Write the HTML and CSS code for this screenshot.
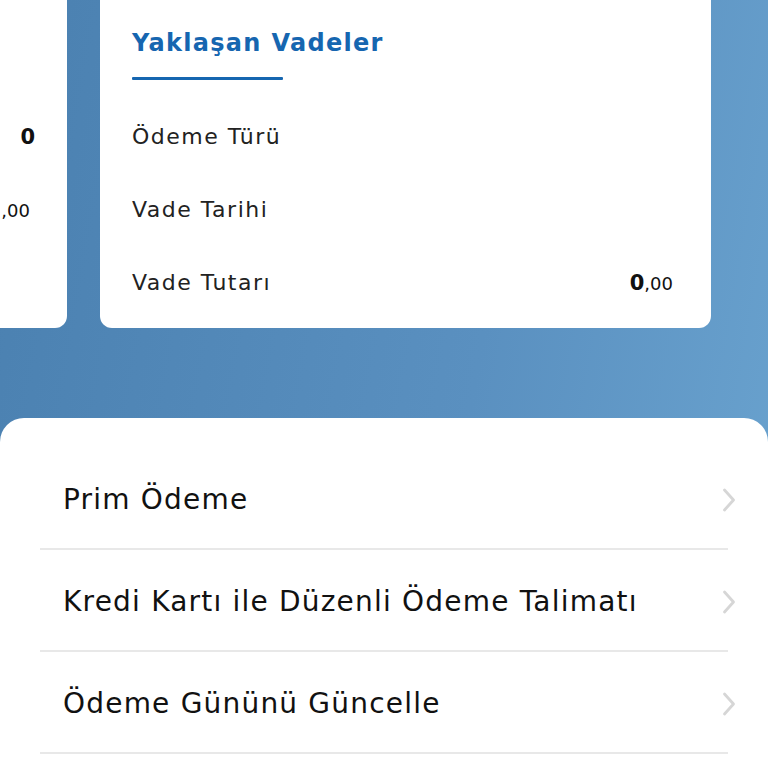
FILE: index.html
```html
<!DOCTYPE html>
<html lang="tr">
<head>
<meta charset="utf-8">
<link rel="stylesheet" href="styles.css">
</head>
<body>
<div class="screen">
  <div class="cards">
    <div class="card card-left">
      <div class="card-head"></div>
      <div class="row"><span class="value count"><b>0</b></span></div>
      <div class="row"><span class="value"><small>,00</small></span></div>
      <div class="row"></div>
    </div>
    <div class="card card-main">
      <div class="card-head">
        <h2 class="title">Yaklaşan Vadeler</h2>
        <div class="underline"></div>
      </div>
      <div class="row"><span class="label">Ödeme Türü</span></div>
      <div class="row"><span class="label">Vade Tarihi</span></div>
      <div class="row"><span class="label">Vade Tutarı</span><span class="value"><b>0</b><small>,00</small></span></div>
    </div>
  </div>
  <div class="sheet">
    <ul class="menu">
      <li class="item"><span>Prim Ödeme</span><svg class="chev" viewBox="0 0 14 24" width="14" height="24"><path d="M2.5 2 L11.5 12 L2.5 22" fill="none" stroke="#d6d6d6" stroke-width="2.8" stroke-linecap="round" stroke-linejoin="round"/></svg></li>
      <li class="item"><span>Kredi Kartı ile Düzenli Ödeme Talimatı</span><svg class="chev" viewBox="0 0 14 24" width="14" height="24"><path d="M2.5 2 L11.5 12 L2.5 22" fill="none" stroke="#d6d6d6" stroke-width="2.8" stroke-linecap="round" stroke-linejoin="round"/></svg></li>
      <li class="item"><span>Ödeme Gününü Güncelle</span><svg class="chev" viewBox="0 0 14 24" width="14" height="24"><path d="M2.5 2 L11.5 12 L2.5 22" fill="none" stroke="#d6d6d6" stroke-width="2.8" stroke-linecap="round" stroke-linejoin="round"/></svg></li>
    </ul>
  </div>
</div>
</body>
</html>
```
FILE: styles.css
```css
* { box-sizing: border-box; }
html, body { margin: 0; padding: 0; }
body {
  width: 768px;
  height: 768px;
  overflow: hidden;
  font-family: "DejaVu Sans", "Noto Sans", sans-serif;
  color: #1a1a1a;
}
.screen {
  width: 768px;
  height: 768px;
  background: linear-gradient(100deg, #4a80b0 0%, #5a90c0 60%, #6aa3cf 100%);
  display: flex;
  flex-direction: column;
}
.cards {
  display: flex;
  gap: 33px;
  margin-left: -180px;
  height: 328px;
  flex-shrink: 0;
}
.card {
  background: #fff;
  border-radius: 0 0 12px 12px;
  display: flex;
  flex-direction: column;
}
.card-left {
  width: 247px;
  padding: 0 37px 0 32px;
}
.card-main {
  width: 611px;
  padding: 0 38px 0 32px;
}
.card-head {
  height: 100px;
  padding-top: 26px;
}
.title {
  margin: 0;
  font-size: 24px;
  font-weight: 700;
  color: #1666b0;
  line-height: 34px;
  letter-spacing: 1.3px;
}
.underline {
  width: 151px;
  height: 3px;
  background: #1666b0;
  margin-top: 17px;
  border-radius: 1px;
}
.row {
  height: 73px;
  display: flex;
  align-items: center;
  justify-content: space-between;
  font-size: 22px;
  letter-spacing: 1.5px;
}
.label { color: #222; font-weight: 400; }
.value { margin-left: auto; color: #111; letter-spacing: 0; }
.value b { font-weight: 700; font-size: 21px; }
.value small { font-size: 18px; font-weight: 400; }
.count { margin-right: -5px; }
.sheet {
  margin-top: 90px;
  flex: 1;
  background: #fff;
  border-radius: 24px 24px 0 0;
  padding: 30px 40px 0 40px;
}
.menu {
  list-style: none;
  margin: 0;
  padding: 0;
}
.item {
  height: 102px;
  display: flex;
  align-items: center;
  justify-content: space-between;
  padding: 3px 0 0 23px;
  border-bottom: 2px solid #e8e8e8;
  font-size: 28px;
  letter-spacing: 1.2px;
  color: #111;
}
.chev { margin-right: -8px; }
```
